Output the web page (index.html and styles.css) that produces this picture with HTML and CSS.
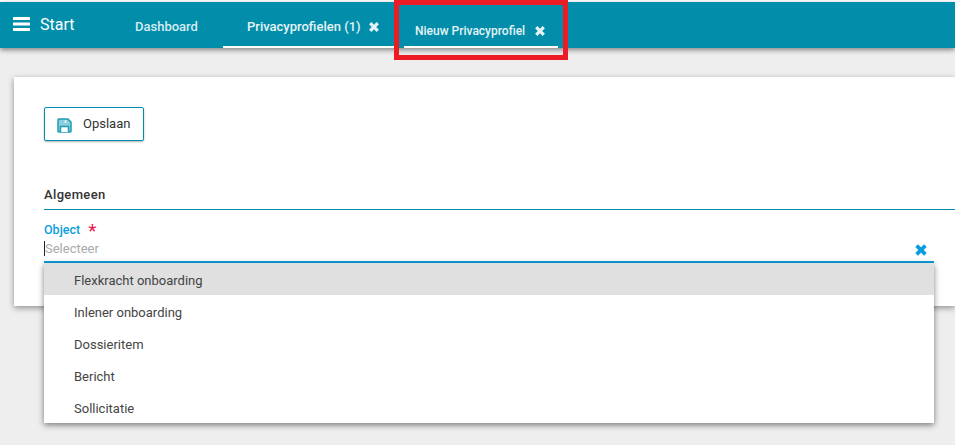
FILE: index.html
```html
<!DOCTYPE html>
<html lang="nl">
<head>
<meta charset="utf-8">
<title>Nieuw Privacyprofiel</title>
<link rel="stylesheet" href="styles.css">
</head>
<body>
<header class="topbar">
  <a class="start">
    <svg class="bars" viewBox="0 0 17 14"><rect y="0" width="17" height="3" rx=".5"/><rect y="5.5" width="17" height="3" rx=".5"/><rect y="11" width="17" height="3" rx=".5"/></svg>
    <span>Start</span>
  </a>
  <nav class="tabs">
    <a class="tab tab-dash">Dashboard</a>
    <a class="tab tab-list">Privacyprofielen (1)
      <svg class="close" viewBox="0 0 12 12"><path d="M2.2 2.2l7.6 7.6M9.8 2.2l-7.6 7.6"/></svg>
    </a>
    <a class="tab tab-new">Nieuw Privacyprofiel
      <svg class="close" viewBox="0 0 12 12"><path d="M2.2 2.2l7.6 7.6M9.8 2.2l-7.6 7.6"/></svg>
    </a>
  </nav>
</header>
<div class="highlight"></div>
<main class="card">
  <button class="save">
    <svg class="save-icon" viewBox="0 0 15 15"><path class="save-body" d="M1 1.7v11.6c0 .4.3.7.7.7h11.6c.4 0 .7-.3.7-.7V4.2L11 1H1.7c-.4 0-.7.3-.7.7z"/><path class="save-line" d="M3.5 14V8.5h8V14"/><path class="save-slot" d="M8.5 2.4v2.4"/></svg>
    <span>Opslaan</span>
  </button>
  <h2 class="section">Algemeen</h2>
  <div class="field">
    <label class="label">Object <span class="req">*</span></label>
    <div class="input">
      <span class="caret"></span><span class="placeholder">Selecteer</span>
      <svg class="clear" viewBox="0 0 14 14"><path d="M2.6 2.6l8.8 8.8M11.4 2.6l-8.8 8.8"/></svg>
    </div>
    <ul class="menu">
      <li class="active">Flexkracht onboarding</li>
      <li>Inlener onboarding</li>
      <li>Dossieritem</li>
      <li>Bericht</li>
      <li>Sollicitatie</li>
    </ul>
  </div>
</main>
</body>
</html>
```
FILE: styles.css
```css
* { box-sizing: border-box; }
html, body { margin: 0; height: 445px; overflow: hidden; }
body {
  position: relative;
  background: #eeeeee;
  font-family: Roboto, "Liberation Sans", sans-serif;
  color: #333;
  padding-top: 2px;
}
body::before {
  content: "";
  position: absolute;
  left: 0; right: 0; top: 0;
  height: 2px;
  background: #fff;
}
.topbar {
  display: flex;
  height: 46px;
  background: #028eaa;
  box-shadow: 0 2px 5px rgba(0,0,0,.45);
  color: #fff;
  position: relative;
}
.start {
  display: flex;
  align-items: center;
  gap: 10px;
  width: 117px;
  padding-left: 13px;
  font-size: 16px;
  height: 46px;
}
.bars { width: 17px; height: 14px; fill: #fff; margin-top: -2px; }
.start span { margin-top: -1px; }
.tabs { display: flex; font-size: 13px; font-weight: 500; }
.tab {
  display: flex;
  align-items: center;
  height: 46px;
  color: #d5edf2;
  white-space: nowrap;
  padding-top: 3px;
}
.tab-dash { width: 106px; padding-left: 18px; }
.tab-list {
  width: 171px;
  padding-top: 5px;
  padding-left: 24px;
  gap: 7px;
  color: #e4f3f6;
  border-bottom: 2px solid #fff;
}
.tab-new {
  width: 154px;
  margin-left: 10px;
  padding-top: 14px;
  padding-left: 11px;
  gap: 9px;
  font-size: 12px;
  color: #e4f3f6;
  border-bottom: 2px solid #fff;
}
.close { width: 12px; height: 12px; fill: none; stroke: #e4f3f6; stroke-width: 3.2; }
.highlight {
  position: absolute;
  left: 394px; top: 0;
  width: 174px; height: 60px;
  border: 5px solid #ed1c24;
  z-index: 5;
}
.card {
  position: relative;
  margin: 29px 0 0 14px;
  height: 229px;
  padding: 30px 0 0 30px;
  background: #fff;
  box-shadow: 0 2px 6px rgba(0,0,0,.4);
}
.save {
  display: flex;
  align-items: center;
  gap: 11px;
  width: 100px;
  height: 34px;
  padding: 0 0 2px 12px;
  background: #fff;
  border: 1px solid #028eaa;
  border-radius: 2px;
  box-shadow: 0 1px 2px rgba(0,0,0,.3);
  font: 400 13px Roboto, sans-serif;
  color: #333;
}
.save-icon { width: 15px; height: 15px; margin-top: 4px; }
.save-body { fill: #8ccfdc; stroke: #1f9db5; stroke-width: 1.5; }
.save-line { fill: #fff; stroke: #1f9db5; stroke-width: 1.5; }
.save-slot { fill: none; stroke: #fff; stroke-width: 1.5; }
.section {
  margin: 45px 0 0;
  height: 24px;
  padding-top: 1px;
  font-size: 13px;
  font-weight: 500;
  letter-spacing: .35px;
  line-height: 16px;
  color: #333;
  border-bottom: 1px solid #028eaa;
}
.field { position: relative; width: 890px; margin-top: 11px; padding-top: 2px; }
.label {
  display: block;
  height: 14px;
  font-size: 12.5px;
  font-weight: 500;
  line-height: 14px;
  color: #0b9ede;
}
.req {
  color: #f0134d;
  font-size: 19px;
  line-height: 14px;
  margin-left: 5px;
  font-weight: 400;
  vertical-align: -3px;
}
.input {
  display: flex;
  align-items: center;
  height: 26px;
  padding-bottom: 2px;
  border-bottom: 2px solid #0b9ede;
  position: relative;
}
.caret { width: 1px; height: 15px; background: #222; }
.placeholder { font-size: 13px; color: #aaa; }
.clear {
  position: absolute;
  right: 6px; top: 6px;
  width: 14px; height: 14px;
  fill: none;
  stroke: #0b9ede;
  stroke-width: 3.8;
}
.menu {
  position: absolute;
  left: 0; top: 42px;
  width: 890px;
  margin: 0;
  padding: 0;
  list-style: none;
  background: #fff;
  box-shadow: 0 2px 6px rgba(0,0,0,.5);
  font-size: 13px;
  color: #444;
  z-index: 3;
}
.menu li {
  height: 32px;
  line-height: 35px;
  padding-left: 30px;
}
.menu li.active { background: #e0e0e0; }
```
